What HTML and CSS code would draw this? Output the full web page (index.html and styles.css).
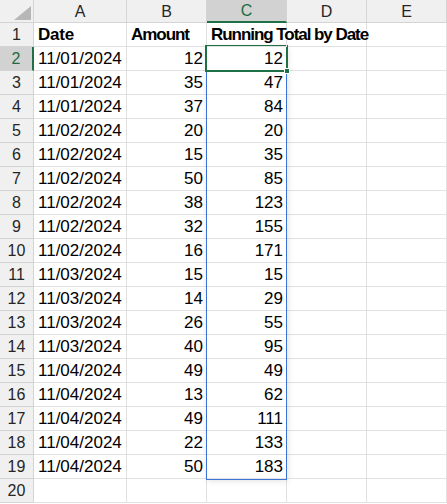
FILE: index.html
```html
<!DOCTYPE html>
<html>
<head>
<meta charset="utf-8">
<link rel="stylesheet" href="styles.css">
</head>
<body>
<div class="sheet">
  <div class="grid">
    <div class="hd corner"><span class="tri"></span></div>
    <div class="hd col">A</div>
    <div class="hd col">B</div>
    <div class="hd col sel-col">C</div>
    <div class="hd col">D</div>
    <div class="hd col">E</div>

    <div class="hd row">1</div><div class="c b">Date</div><div class="c b tight">Amount</div><div class="c b tight over">Running Total by Date</div><div class="c"></div><div class="c"></div>
    <div class="hd row sel-row">2</div><div class="c">11/01/2024</div><div class="c n">12</div><div class="c n">12</div><div class="c"></div><div class="c"></div>
    <div class="hd row">3</div><div class="c">11/01/2024</div><div class="c n">35</div><div class="c n">47</div><div class="c"></div><div class="c"></div>
    <div class="hd row">4</div><div class="c">11/01/2024</div><div class="c n">37</div><div class="c n">84</div><div class="c"></div><div class="c"></div>
    <div class="hd row">5</div><div class="c">11/02/2024</div><div class="c n">20</div><div class="c n">20</div><div class="c"></div><div class="c"></div>
    <div class="hd row">6</div><div class="c">11/02/2024</div><div class="c n">15</div><div class="c n">35</div><div class="c"></div><div class="c"></div>
    <div class="hd row">7</div><div class="c">11/02/2024</div><div class="c n">50</div><div class="c n">85</div><div class="c"></div><div class="c"></div>
    <div class="hd row">8</div><div class="c">11/02/2024</div><div class="c n">38</div><div class="c n">123</div><div class="c"></div><div class="c"></div>
    <div class="hd row">9</div><div class="c">11/02/2024</div><div class="c n">32</div><div class="c n">155</div><div class="c"></div><div class="c"></div>
    <div class="hd row">10</div><div class="c">11/02/2024</div><div class="c n">16</div><div class="c n">171</div><div class="c"></div><div class="c"></div>
    <div class="hd row">11</div><div class="c">11/03/2024</div><div class="c n">15</div><div class="c n">15</div><div class="c"></div><div class="c"></div>
    <div class="hd row">12</div><div class="c">11/03/2024</div><div class="c n">14</div><div class="c n">29</div><div class="c"></div><div class="c"></div>
    <div class="hd row">13</div><div class="c">11/03/2024</div><div class="c n">26</div><div class="c n">55</div><div class="c"></div><div class="c"></div>
    <div class="hd row">14</div><div class="c">11/03/2024</div><div class="c n">40</div><div class="c n">95</div><div class="c"></div><div class="c"></div>
    <div class="hd row">15</div><div class="c">11/04/2024</div><div class="c n">49</div><div class="c n">49</div><div class="c"></div><div class="c"></div>
    <div class="hd row">16</div><div class="c">11/04/2024</div><div class="c n">13</div><div class="c n">62</div><div class="c"></div><div class="c"></div>
    <div class="hd row">17</div><div class="c">11/04/2024</div><div class="c n">49</div><div class="c n">111</div><div class="c"></div><div class="c"></div>
    <div class="hd row">18</div><div class="c">11/04/2024</div><div class="c n">22</div><div class="c n">133</div><div class="c"></div><div class="c"></div>
    <div class="hd row">19</div><div class="c">11/04/2024</div><div class="c n">50</div><div class="c n">183</div><div class="c"></div><div class="c"></div>
    <div class="hd row">20</div><div class="c"></div><div class="c"></div><div class="c"></div><div class="c"></div><div class="c"></div>
  </div>
  <div class="spill"></div>
  <div class="active"></div>
  <div class="handle"></div>
</div>
</body>
</html>
```

FILE: styles.css
```css
* { box-sizing: border-box; }
html, body { margin: 0; padding: 0; background: #ffffff; }
body { font-family: "Liberation Sans", Arial, sans-serif; color: #000; }

.sheet { position: relative; width: 447px; height: 504px; overflow: hidden; }

.grid {
  display: grid;
  grid-template-columns: 34px 93px 80px 80px 80px 80px;
  grid-template-rows: 23px;
  grid-auto-rows: 24px;
}

.c {
  border-right: 1px solid #e1e1e1;
  border-bottom: 1px solid #e1e1e1;
  font-size: 17px;
  line-height: 23px;
  padding: 0 3px 0 4px;
  white-space: nowrap;
  overflow: hidden;
}
.c.n { text-align: right; }
.c.b { font-weight: bold; letter-spacing: -0.2px; }
.c.tight { letter-spacing: -1.05px; }
.c.over { overflow: visible; position: relative; z-index: 1; }

.hd {
  background: #f0f0f0;
  border-right: 1px solid #d4d4d4;
  border-bottom: 1px solid #d4d4d4;
  color: #262626;
  font-size: 16px;
  display: flex;
  align-items: center;
  justify-content: center;
}
.hd.col { padding-top: 1px; }

.corner {
  justify-content: flex-end;
  align-items: flex-end;
  padding: 0 2px 2px 0;
}
.tri {
  width: 17px;
  height: 14px;
  background: #b7b7b7;
  clip-path: polygon(100% 0, 100% 100%, 0 100%);
}

.sel-col {
  background: #d2d2d2;
  color: #1d6b3f;
  border-bottom: 2px solid #1f7145;
}
.sel-row {
  background: #d2d2d2;
  color: #1d6b3f;
  border-right: 2px solid #1f7145;
}

.spill {
  position: absolute;
  left: 206px;
  top: 46px;
  width: 81px;
  height: 434px;
  border: 1px solid #3c73d6;
  box-shadow: 1px 1px 6px rgba(0, 0, 0, 0.12);
}
.active {
  position: absolute;
  left: 205px;
  top: 45px;
  width: 83px;
  height: 27px;
  border: 2px solid #1f7145;
}
.handle {
  position: absolute;
  left: 284px;
  top: 68px;
  width: 6px;
  height: 6px;
  background: #1f7145;
  border: 1px solid #ffffff;
}
```
